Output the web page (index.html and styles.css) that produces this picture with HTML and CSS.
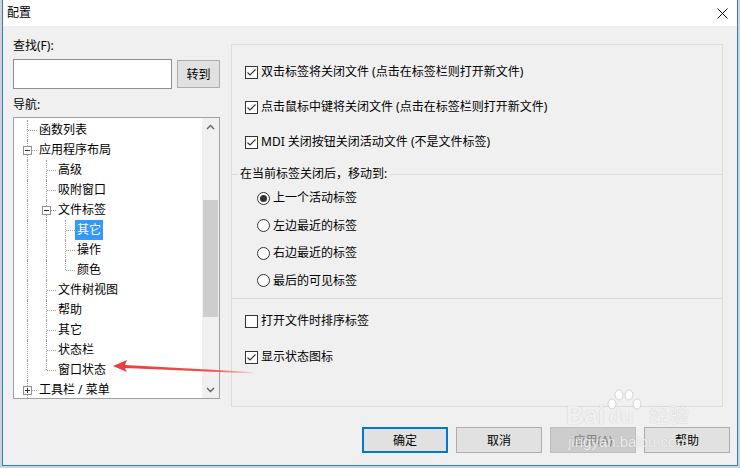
FILE: index.html
```html
<!DOCTYPE html>
<html lang="zh-CN">
<head>
<meta charset="utf-8">
<title>配置</title>
<link rel="stylesheet" href="styles.css">
</head>
<body>
<div class="window">
  <div class="titlebar">
    <span class="title">配置</span>
    <svg class="close" width="11" height="11" viewBox="0 0 11 11"><path d="M0.5 0.5 L10.5 10.5 M10.5 0.5 L0.5 10.5" stroke="#000" stroke-width="1" fill="none"/></svg>
  </div>
  <div class="content">
    <div class="left">
      <div class="label find-label">查找(F):</div>
      <div class="search-row">
        <div class="input"></div>
        <button class="btn go">转到</button>
      </div>
      <div class="label nav-label">导航:</div>
      <div class="tree">
        <div class="tree-rows">
          <div class="row"><i class="g tee"></i><span class="txt">函数列表</span></div>
          <div class="row"><i class="g tee"><b class="exp minus"></b></i><span class="txt">应用程序布局</span></div>
          <div class="row"><i class="g pipe"></i><i class="g tee"></i><span class="txt">高级</span></div>
          <div class="row"><i class="g pipe"></i><i class="g tee"></i><span class="txt">吸附窗口</span></div>
          <div class="row"><i class="g pipe"></i><i class="g tee"><b class="exp minus"></b></i><span class="txt">文件标签</span></div>
          <div class="row"><i class="g pipe"></i><i class="g pipe"></i><i class="g tee"></i><span class="txt sel">其它</span></div>
          <div class="row"><i class="g pipe"></i><i class="g pipe"></i><i class="g tee"></i><span class="txt">操作</span></div>
          <div class="row"><i class="g pipe"></i><i class="g pipe"></i><i class="g ell"></i><span class="txt">颜色</span></div>
          <div class="row"><i class="g pipe"></i><i class="g tee"></i><span class="txt">文件树视图</span></div>
          <div class="row"><i class="g pipe"></i><i class="g tee"></i><span class="txt">帮助</span></div>
          <div class="row"><i class="g pipe"></i><i class="g tee"></i><span class="txt">其它</span></div>
          <div class="row"><i class="g pipe"></i><i class="g tee"></i><span class="txt">状态栏</span></div>
          <div class="row"><i class="g pipe"></i><i class="g ell"></i><span class="txt">窗口状态</span></div>
          <div class="row"><i class="g tee"><b class="exp plus"></b></i><span class="txt">工具栏 / 菜单</span></div>
        </div>
        <div class="vscroll">
          <div class="arrow"><svg width="9" height="6" viewBox="0 0 9 6"><path d="M1 5 L4.5 1.5 L8 5" stroke="#606060" stroke-width="1.4" fill="none"/></svg></div>
          <div class="thumb"></div>
          <div class="track-fill"></div>
          <div class="arrow"><svg width="9" height="6" viewBox="0 0 9 6"><path d="M1 1 L4.5 4.5 L8 1" stroke="#606060" stroke-width="1.4" fill="none"/></svg></div>
        </div>
      </div>
    </div>
    <div class="options">
      <div class="sec1">
        <div class="opt"><span class="cb on"><svg width="11" height="11" viewBox="0 0 11 11"><path d="M1.5 5.5 L4 8 L9.5 2.5" stroke="#333" stroke-width="1.1" fill="none"/></svg></span>双击标签将关闭文件 (点击在标签栏则打开新文件)</div>
        <div class="opt"><span class="cb on"><svg width="11" height="11" viewBox="0 0 11 11"><path d="M1.5 5.5 L4 8 L9.5 2.5" stroke="#333" stroke-width="1.1" fill="none"/></svg></span>点击鼠标中键将关闭文件 (点击在标签栏则打开新文件)</div>
        <div class="opt"><span class="cb on"><svg width="11" height="11" viewBox="0 0 11 11"><path d="M1.5 5.5 L4 8 L9.5 2.5" stroke="#333" stroke-width="1.1" fill="none"/></svg></span>MDI 关闭按钮关闭活动文件 (不是文件标签)</div>
      </div>
      <fieldset class="sec2">
        <legend>在当前标签关闭后，移动到:</legend>
        <div class="radios">
          <div class="opt"><span class="rb on"></span>上一个活动标签</div>
          <div class="opt"><span class="rb"></span>左边最近的标签</div>
          <div class="opt"><span class="rb"></span>右边最近的标签</div>
          <div class="opt"><span class="rb"></span>最后的可见标签</div>
        </div>
      </fieldset>
      <div class="sec3">
        <div class="opt"><span class="cb"></span>打开文件时排序标签</div>
        <div class="opt"><span class="cb on"><svg width="11" height="11" viewBox="0 0 11 11"><path d="M1.5 5.5 L4 8 L9.5 2.5" stroke="#333" stroke-width="1.1" fill="none"/></svg></span>显示状态图标</div>
      </div>
    </div>
  </div>
  <div class="footer">
    <button class="btn act default">确定</button>
    <button class="btn act">取消</button>
    <button class="btn act disabled">应用(A)</button>
    <button class="btn act">帮助</button>
  </div>

  <svg class="annot-arrow" width="150" height="24" viewBox="0 0 150 24">
    <defs>
      <linearGradient id="fade" x1="0" y1="0" x2="1" y2="0">
        <stop offset="0" stop-color="#f23a3a"/>
        <stop offset="0.7" stop-color="#f23a3a" stop-opacity="0.9"/>
        <stop offset="1" stop-color="#f23a3a" stop-opacity="0.1"/>
      </linearGradient>
    </defs>
    <path d="M5 11 L19 5 L17 10 L145 17 L145 18.5 L17 13 L19 17 Z" fill="url(#fade)"/>
  </svg>

  <div class="watermark">
    <div class="wm-top"><span class="wm-bai">Bai</span><span class="wm-paw"><svg width="40" height="34" viewBox="0 0 40 34"><ellipse cx="12" cy="6" rx="4" ry="5" fill="rgba(255,255,255,0.8)" stroke="rgba(150,150,150,0.35)"/><ellipse cx="22" cy="6" rx="4" ry="5" fill="rgba(255,255,255,0.8)" stroke="rgba(150,150,150,0.35)"/><ellipse cx="5" cy="15" rx="4" ry="5" fill="rgba(255,255,255,0.8)" stroke="rgba(150,150,150,0.35)"/><ellipse cx="30" cy="15" rx="4" ry="5" fill="rgba(255,255,255,0.8)" stroke="rgba(150,150,150,0.35)"/></svg><span class="wm-du">du</span></span><span class="wm-jy">经验</span></div>
    <div class="wm-url">jingyan.baidu.com</div>
  </div>
</div>
</body>
</html>
```
FILE: styles.css
```css
* { box-sizing: border-box; }
html, body { margin: 0; padding: 0; }
body {
  width: 740px;
  height: 468px;
  background: #d2d2d2;
  font-family: "Noto Sans", "Noto Sans CJK SC", sans-serif;
  font-size: 12px;
  color: #000;
  overflow: hidden;
}
.window {
  position: relative;
  margin-left: 2px;
  width: 736px;
  height: 466px;
  background: #f0f0f0;
  border: 1px solid #2b7fd4;
  border-top: 0;
  display: flex;
  flex-direction: column;
}
.titlebar {
  height: 26px;
  flex: none;
  background: #fff;
  display: flex;
  align-items: center;
  justify-content: space-between;
  padding: 0 9px 0 4px;
}
.title { font-size: 12px; line-height: 16px; }
.close { display: block; }

.content {
  height: 381px;
  flex: none;
  display: flex;
  align-items: flex-start;
  padding-left: 10px;
  gap: 11px;
}
.left { width: 207px; display: flex; flex-direction: column; }
.label { line-height: 16px; height: 16px; }
.find-label { margin-top: 12px; }
.search-row {
  margin-top: 5px;
  height: 30px;
  display: flex;
  align-items: center;
  gap: 5px;
}
.input {
  width: 159px;
  height: 30px;
  background: #fff;
  border: 1px solid #8f8f8f;
}
.btn {
  font-family: "Noto Sans", "Noto Sans CJK SC", sans-serif;
  font-size: 12px;
  color: #000;
  background: #e1e1e1;
  border: 1px solid #adadad;
  padding: 0;
  margin: 0;
}
.go { width: 43px; height: 28px; }
.nav-label { margin-top: 8px; }

.tree {
  margin-top: 4px;
  width: 207px;
  height: 282px;
  border: 1px solid #a0a0a0;
  background: #fff;
  display: flex;
}
.tree-rows {
  flex: 1;
  overflow: hidden;
  padding-left: 4px;
  padding-top: 2px;
}
.row {
  height: 20px;
  display: flex;
  align-items: center;
  white-space: nowrap;
}
.g {
  flex: none;
  width: 19px;
  height: 20px;
  position: relative;
}
.g::before, .g::after { content: ""; position: absolute; }
.g.pipe::before, .g.tee::before {
  left: 9px; top: 0; bottom: 0;
  border-left: 1px dotted #a0a0a0;
}
.g.ell::before {
  left: 9px; top: 0; height: 10px;
  border-left: 1px dotted #a0a0a0;
}
.g.tee::after, .g.ell::after {
  left: 10px; top: 10px; width: 9px;
  border-top: 1px dotted #a0a0a0;
}
.exp {
  position: absolute;
  left: 5px; top: 6px;
  width: 9px; height: 9px;
  background: #fff;
  border: 1px solid #919191;
  z-index: 1;
}
.exp::before {
  content: ""; position: absolute;
  left: 1px; top: 3px; width: 5px; height: 1px; background: #333;
}
.exp.plus::after {
  content: ""; position: absolute;
  left: 3px; top: 1px; width: 1px; height: 5px; background: #333;
}
.txt {
  line-height: 20px;
  height: 20px;
  padding: 0 2px;
}
.txt.sel { background: #3399ff; color: #fff; }

.vscroll {
  width: 17px;
  flex: none;
  background: #f0f0f0;
  display: flex;
  flex-direction: column;
  align-items: center;
}
.arrow {
  height: 17px;
  width: 17px;
  display: flex;
  align-items: center;
  justify-content: center;
  flex: none;
}
.arrow svg { display: block; }
.thumb {
  margin-top: 65px;
  width: 15px;
  height: 117px;
  background: #cdcdcd;
  flex: none;
}
.track-fill { flex: 1; }

.options {
  margin-top: 18px;
  width: 492px;
  height: 363px;
  border: 1px solid #dcdcdc;
  display: flex;
  flex-direction: column;
}
.opt {
  height: 18px;
  line-height: 18px;
  display: flex;
  align-items: center;
  white-space: nowrap;
}
.cb {
  width: 13px; height: 13px;
  flex: none;
  border: 1px solid #333;
  background: #fff;
  margin-right: 3px;
  display: flex;
  align-items: center;
  justify-content: center;
}
.cb svg { display: block; }
.rb {
  width: 13px; height: 13px;
  flex: none;
  border: 1px solid #333;
  border-radius: 50%;
  background: #fff;
  margin-right: 3px;
  display: flex;
  align-items: center;
  justify-content: center;
}
.rb.on::before {
  content: "";
  width: 7px; height: 7px;
  border-radius: 50%;
  background: #333;
}
.sec1 {
  height: 121px;
  flex: none;
  padding: 18px 0 0 13px;
  display: flex;
  flex-direction: column;
  gap: 17px;
}
.sec2 {
  margin: 0;
  padding: 0;
  min-width: 0;
  height: 133px;
  flex: none;
  border: 0;
  border-top: 1px solid #dcdcdc;
  border-bottom: 1px solid #dcdcdc;
}
.sec2 legend {
  margin-left: 6px;
  padding: 0 2px;
  line-height: 16px;
  height: 16px;
}
.radios {
  padding: 7px 0 0 25px;
  display: flex;
  flex-direction: column;
  gap: 9.5px;
}
.sec3 {
  padding: 13px 0 0 13px;
  display: flex;
  flex-direction: column;
  gap: 18px;
}

.footer {
  margin-top: 20px;
  padding-right: 7px;
  display: flex;
  justify-content: flex-end;
  gap: 8px;
}
.act { width: 86px; height: 26px; }
.act.default { border: 2px solid #0078d7; }
.act.disabled { background: #cccccc; border-color: #bfbfbf; color: #838383; }

.annot-arrow {
  position: absolute;
  left: 105px;
  top: 355px;
}
.watermark {
  position: absolute;
  left: 563px;
  top: 389px;
  color: rgba(255,255,255,0.78);
  text-shadow: 0 0 1px rgba(120,120,120,0.45);
  pointer-events: none;
}
.wm-top { display: flex; align-items: flex-end; height: 40px; }
.wm-bai { font-family: "Liberation Sans", sans-serif; font-weight: bold; font-size: 25px; line-height: 28px; }
.wm-paw { position: relative; width: 40px; height: 40px; display: inline-block; }
.wm-paw svg { position: absolute; left: 2px; top: 0; }
.wm-du { position: absolute; left: 4px; bottom: 2px; font-family: "Liberation Sans", sans-serif; font-weight: bold; font-size: 20px; line-height: 22px; }
.wm-jy { font-family: "Noto Sans CJK SC", sans-serif; font-size: 20px; line-height: 28px; margin-left: 4px; }
.wm-url { font-family: "Liberation Sans", sans-serif; font-size: 15px; line-height: 18px; margin-top: 4px; margin-left: 2px; }
```
